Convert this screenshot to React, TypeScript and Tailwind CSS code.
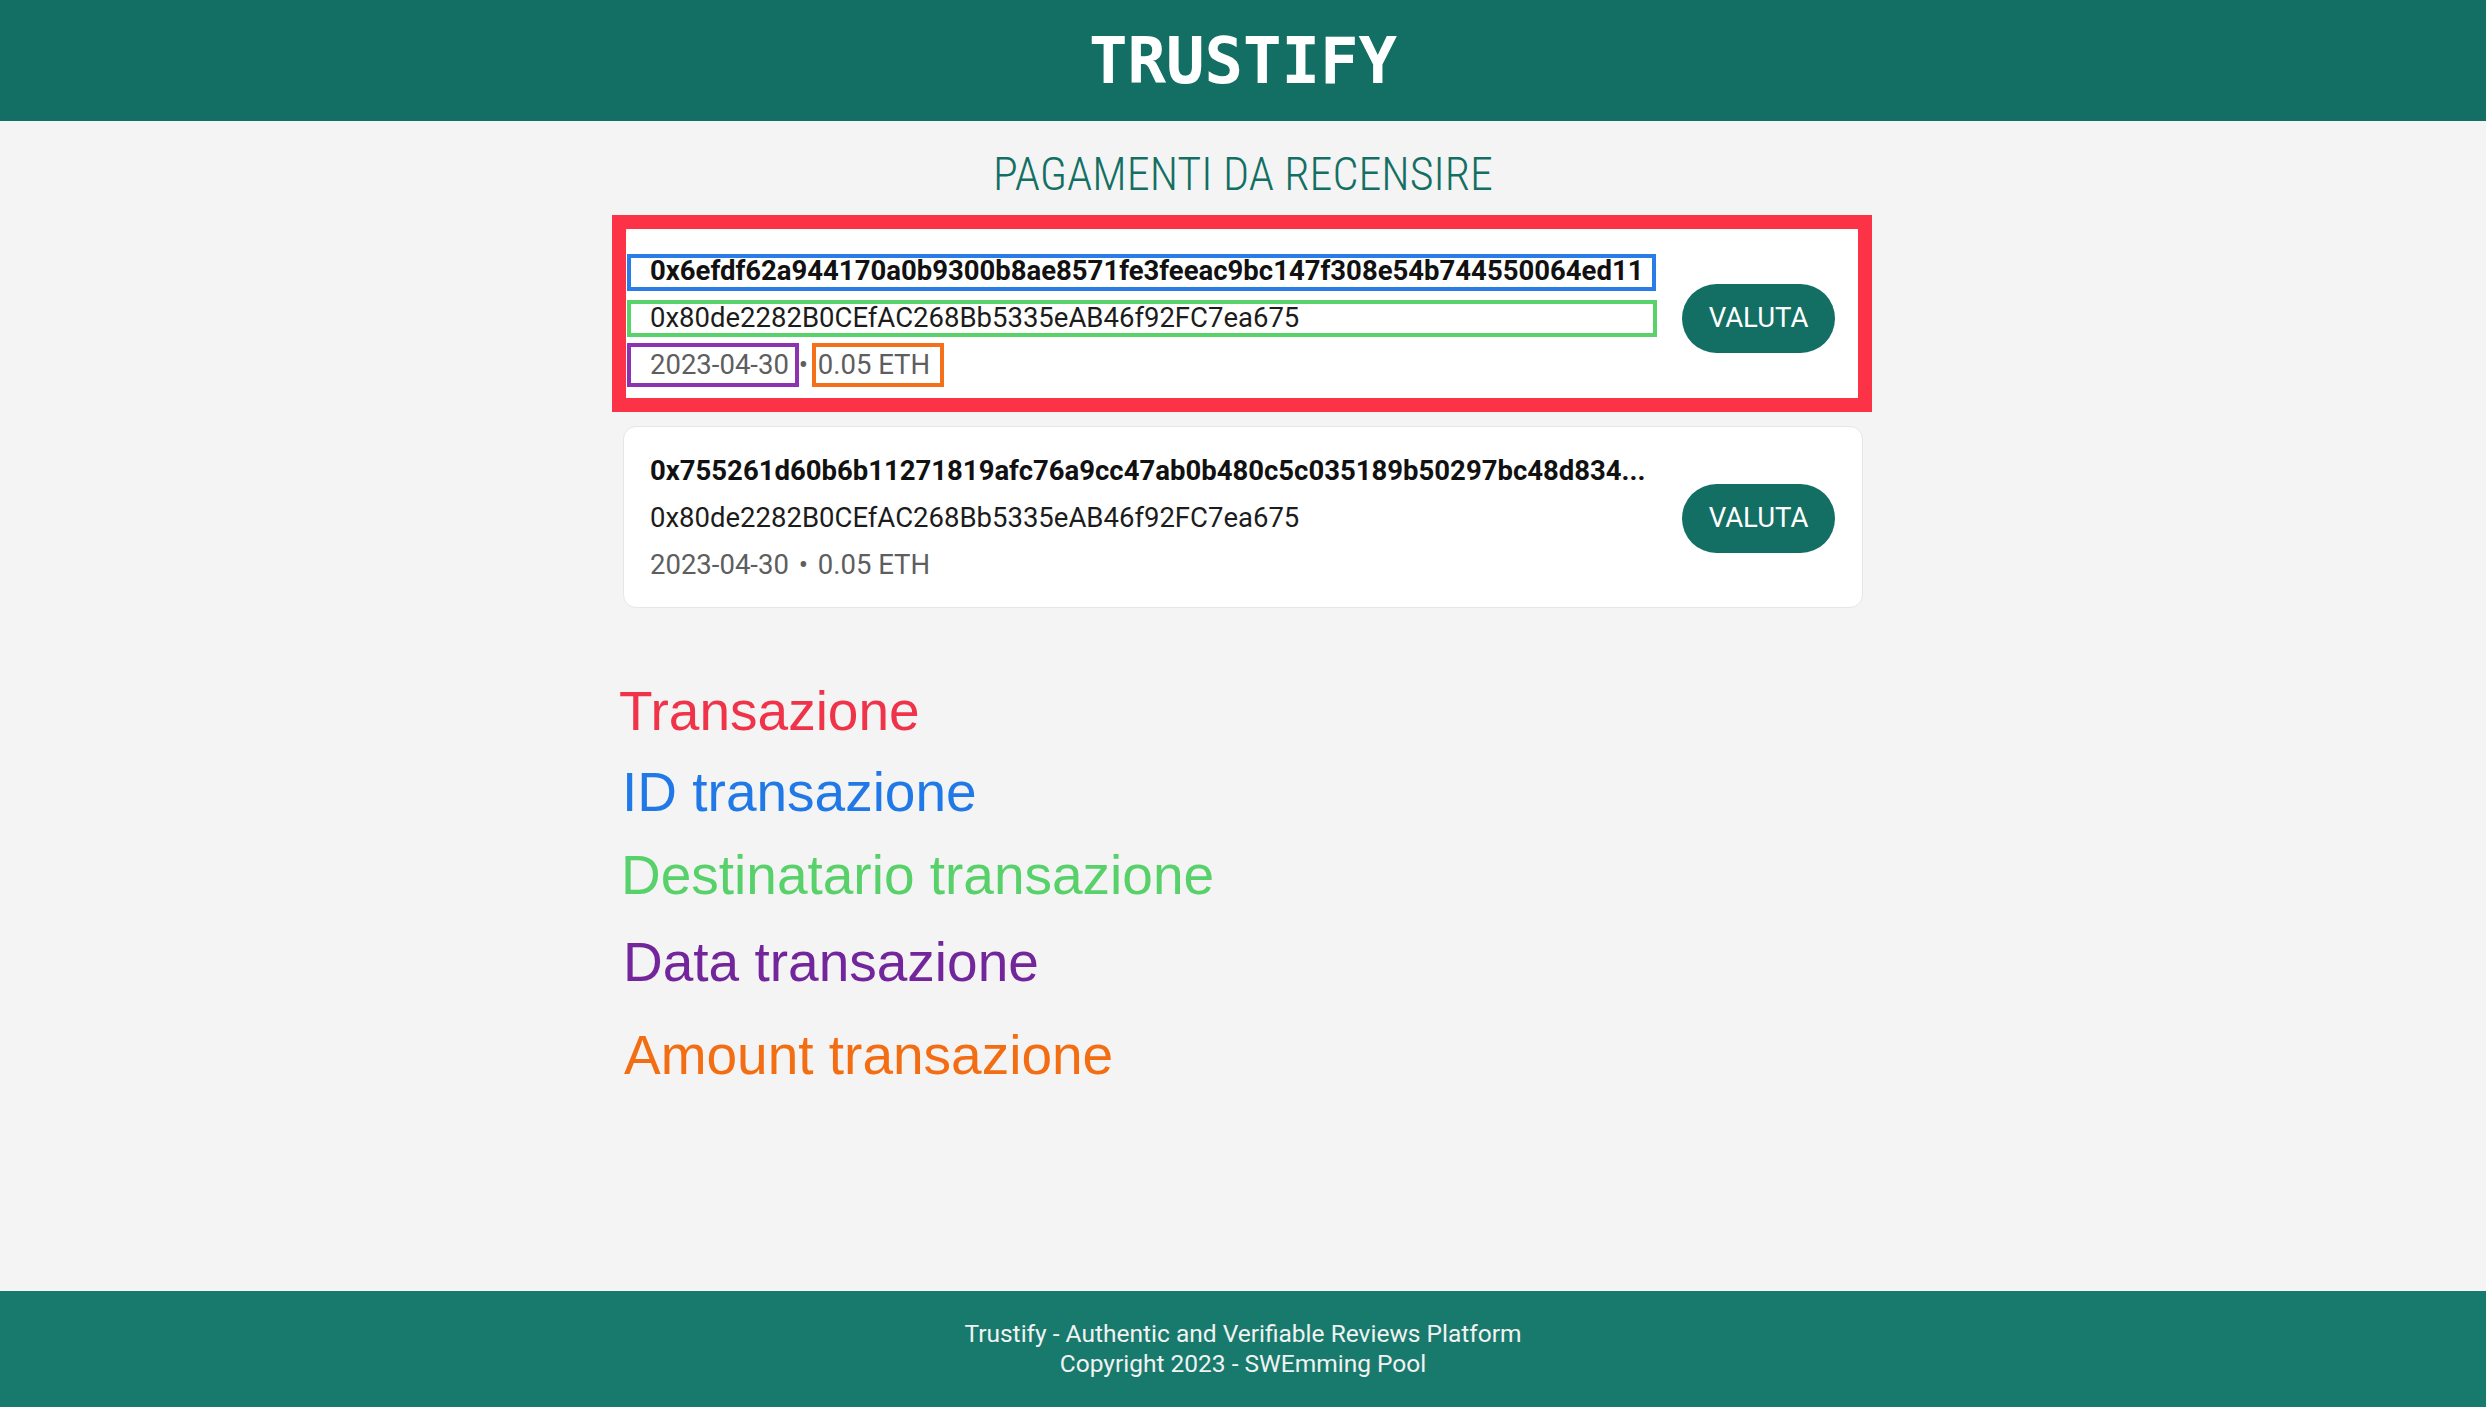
import React from "react";

interface Payment {
  id: string;
  to: string;
  date: string;
  amount: string;
  annotated?: boolean;
}

const payments: Payment[] = [
  {
    id: "0x6efdf62a944170a0b9300b8ae8571fe3feeac9bc147f308e54b744550064ed11",
    to: "0x80de2282B0CEfAC268Bb5335eAB46f92FC7ea675",
    date: "2023-04-30",
    amount: "0.05 ETH",
    annotated: true,
  },
  {
    id: "0x755261d60b6b11271819afc76a9cc47ab0b480c5c035189b50297bc48d834...",
    to: "0x80de2282B0CEfAC268Bb5335eAB46f92FC7ea675",
    date: "2023-04-30",
    amount: "0.05 ETH",
  },
];

// coloured boxes drawn over the first card, matching the legend below
function Annotations() {
  return (
    <>
      <span className="pointer-events-none absolute -left-[12px] -top-[12px] -right-[10px] -bottom-[5px] border-[14px] border-[#fc3246]" />
      <span className="pointer-events-none absolute left-[3px] top-[27px] h-[37px] w-[1029px] border-4 border-[#2a7de6]" />
      <span className="pointer-events-none absolute left-[3px] top-[73px] h-[37px] w-[1030px] border-4 border-[#5ad26b]" />
      <span className="pointer-events-none absolute left-[3px] top-[116px] h-[44px] w-[172px] border-4 border-[#8e33b0]" />
      <span className="pointer-events-none absolute left-[188px] top-[116px] h-[44px] w-[132px] border-4 border-[#f4701a]" />
    </>
  );
}

function PaymentCard({ payment }: { payment: Payment }) {
  return (
    <div className="relative flex h-[182px] items-center rounded-[13px] border border-[#e6e6e6] bg-white pl-[26px] pr-[27px]">
      <div className="min-w-0 flex-1 pt-[1px] text-[27.5px] leading-[47px]">
        <p className="truncate font-bold text-[#111111]">{payment.id}</p>
        <p className="truncate text-[#1c1c1c]">{payment.to}</p>
        <p className="text-[#5e5e5e]">
          {payment.date} <span className="mx-[3px]">•</span> {payment.amount}
        </p>
      </div>
      <button className="ml-[30px] mt-[2px] h-[69px] w-[153px] shrink-0 rounded-full bg-[#136f63] text-[27.5px] text-white">
        VALUTA
      </button>
      {payment.annotated && <Annotations />}
    </div>
  );
}

export default function App() {
  return (
    <div className="flex min-h-screen flex-col bg-[#f4f4f4] font-['Roboto',sans-serif]">
      <header className="flex h-[121px] items-center justify-center bg-[#136f63]">
        <h1 className="font-['DejaVu_Sans_Mono',monospace] text-[64px] font-bold leading-none text-white">
          TRUSTIFY
        </h1>
      </header>

      <main className="flex flex-1 flex-col items-center">
        <h2 className="mt-[27px] font-['Roboto_Condensed','Roboto',sans-serif] text-[46px] font-light leading-[52px] text-[#136f63] [font-stretch:82%]">
          PAGAMENTI DA RECENSIRE
        </h2>

        <div className="mt-[26px] flex w-[1240px] flex-col gap-[18px]">
          {payments.map((p) => (
            <PaymentCard key={p.id} payment={p} />
          ))}
        </div>

        <div className="-ml-[8px] mt-[76px] w-[1240px] font-['Liberation_Sans',Arial,sans-serif] text-[55px] leading-[55px]">
          <p className="text-[#ef3349]">Transazione</p>
          <p className="ml-[3px] mt-[26px] text-[#2079e6]">ID transazione</p>
          <p className="ml-[2px] mt-[28px] text-[#58d16a]">Destinatario transazione</p>
          <p className="ml-[4px] mt-[32px] text-[#73259b]">Data transazione</p>
          <p className="ml-[5px] mt-[38px] text-[#f36d12]">Amount transazione</p>
        </div>
      </main>

      <footer className="flex h-[116px] flex-col items-center justify-center bg-[#177a6d] text-[24.5px] leading-[30px] text-[#f2f2f2]">
        <p>Trustify - Authentic and Verifiable Reviews Platform</p>
        <p>Copyright 2023 - SWEmming Pool</p>
      </footer>
    </div>
  );
}
